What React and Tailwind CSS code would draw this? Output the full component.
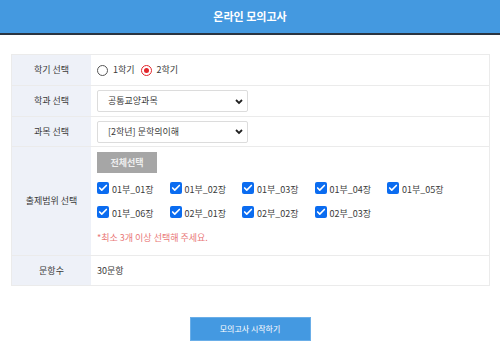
import { Check } from "lucide-react";

const ranges = [
  "01부_01장",
  "01부_02장",
  "01부_03장",
  "01부_04장",
  "01부_05장",
  "01부_06장",
  "02부_01장",
  "02부_02장",
  "02부_03장",
];

function Radio({ label, checked }) {
  return (
    <label className="flex items-center gap-[5px]">
      <span
        className={`w-[11px] h-[11px] rounded-full border flex items-center justify-center ${
          checked ? "border-[#e2262b]" : "border-[#555]"
        }`}
      >
        {checked && <span className="w-[5px] h-[5px] rounded-full bg-[#e2262b]" />}
      </span>
      <span>{label}</span>
    </label>
  );
}

function Select({ value }) {
  return (
    <div className="w-[151px] h-[22px] border border-[#dcdcdc] rounded-[2px] flex items-center justify-between pl-[10px] pr-[4px] bg-white">
      <span>{value}</span>
      <svg width="8" height="6" viewBox="0 0 8 6" className="mt-[1px]">
        <polyline points="1,1 4,4 7,1" fill="none" stroke="#222" strokeWidth="1.8" />
      </svg>
    </div>
  );
}

function Row({ label, height, children }) {
  return (
    <div className={`flex border-b border-[#ebebeb] ${height}`}>
      <div className="w-[79px] shrink-0 bg-[#eef1f8] flex items-center justify-center">
        {label}
      </div>
      <div className="flex-1 pl-[6px] flex items-center">{children}</div>
    </div>
  );
}

export default function App() {
  return (
    <div
      className="w-[500px] h-[359px] bg-white text-[9px] text-[#3a3a3a]"
      style={{ fontFamily: '"Noto Sans CJK KR", "Noto Sans", sans-serif' }}
    >
      <div className="h-[35px] bg-[#4499e0] border-b-2 border-[#2b3440] flex items-center justify-center">
        <h1 className="text-white font-bold text-[11px]">온라인 모의고사</h1>
      </div>

      <div className="ml-[11px] mr-[10px] mt-[19px] border-x border-t border-[#ebebeb]">
        <Row label="학기 선택" height="h-[31px]">
          <div className="flex items-center gap-[6px]">
            <Radio label="1학기" />
            <Radio label="2학기" checked />
          </div>
        </Row>
        <Row label="학과 선택" height="h-[31px]">
          <Select value="공통교양과목" />
        </Row>
        <Row label="과목 선택" height="h-[30px]">
          <Select value="[2학년] 문학의이해" />
        </Row>
        <div className="flex border-b border-[#ebebeb] h-[109px]">
          <div className="w-[79px] shrink-0 bg-[#eef1f8] flex items-center justify-center">
            출제범위 선택
          </div>
          <div className="flex-1 pl-[6px] pt-[5px]">
            <button className="w-[60px] h-[21px] bg-[#a6a6a6] text-[#eeeeee] font-bold">
              전체선택
            </button>
            <div className="flex flex-wrap mt-[3px]">
              {ranges.map((r) => (
                <label key={r} className="w-[72.5px] h-[24px] flex items-center gap-[3px]">
                  <span className="w-[12px] h-[12px] rounded-[2px] bg-[#0b6cf0] flex items-center justify-center">
                    <Check className="w-[10px] h-[10px] text-white" strokeWidth={4} />
                  </span>
                  <span className="mt-[3px]">{r}</span>
                </label>
              ))}
            </div>
            <p className="mt-[8px] text-[#e97777] leading-[12px]">
              *최소 3개 이상 선택해 주세요.
            </p>
          </div>
        </div>
        <Row label="문항수" height="h-[30px]">
          30문항
        </Row>
      </div>

      <button className="block mx-auto mt-[31px] w-[121px] h-[24px] bg-[#4499e1] border border-[#6aaee8] text-white text-[8px]">
        모의고사 시작하기
      </button>
    </div>
  );
}
